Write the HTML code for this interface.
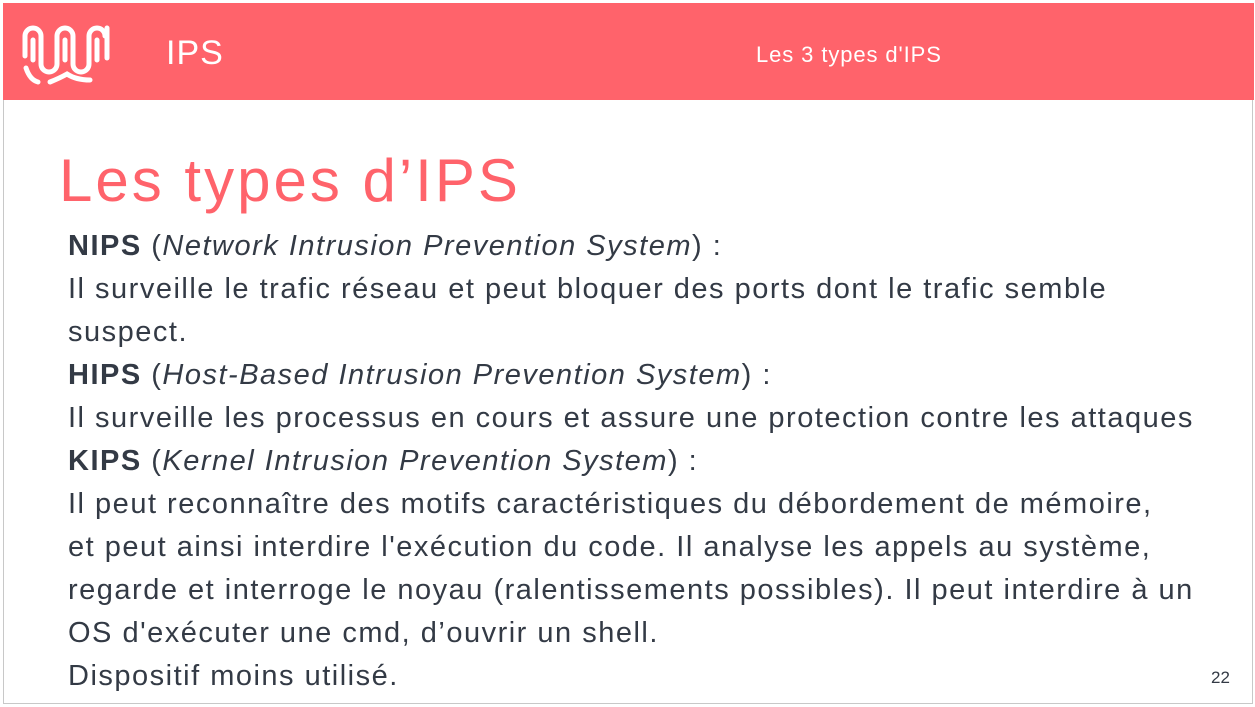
<!DOCTYPE html>
<html><head><meta charset="utf-8"><style>
body{margin:0;width:1255px;height:707px;background:#fff;position:relative;overflow:hidden;font-family:"Liberation Sans",sans-serif}
.frame{position:absolute;left:3px;top:3px;width:1250px;height:701px;border:1px solid #c8c8c8;box-sizing:border-box}
.hdr{position:absolute;left:3px;top:3px;width:1251px;height:97px;background:#ff636b}
.ips{position:absolute;left:166px;top:34px;color:#fff;font-size:34px;letter-spacing:1px}
.sub{position:absolute;left:756px;top:42px;color:#fff;font-size:22px;letter-spacing:0.9px}
h1{position:absolute;left:59px;top:146px;margin:0;font-weight:normal;color:#ff636b;font-size:60px;letter-spacing:3px}
.body{position:absolute;left:68px;top:225px;color:#333a45;font-size:29px;line-height:43px;letter-spacing:1.5px;white-space:nowrap}
.pg{position:absolute;left:1211px;top:668px;font-size:17px;color:#333a45}
</style></head><body>
<div class="frame"></div>
<div class="hdr"></div>
<svg style="position:absolute;left:20px;top:20px" width="95" height="70" viewBox="0 0 95 70" fill="none" stroke="#fff" stroke-width="5" stroke-linecap="round">
<path d="M5 36 V16 a8 8 0 0 1 16 0 V44 a8 8 0 0 0 16 0 V16 a8 8 0 0 1 16 0 V44 a8 8 0 0 0 16 0 V16 a8 8 0 0 1 16 0"/>
<path d="M13 20 V40 M45 20 V40 M77 20 V40"/>
<path d="M6 48 Q10 60 18 62 M30 62 Q40 58 47 54 Q56 60 70 60"/>
<path d="M87 8 V38"/>
</svg>
<div class="ips">IPS</div>
<div class="sub">Les 3 types d'IPS</div>
<h1>Les types d’IPS</h1>
<div class="body">
<b>NIPS</b> (<i>Network Intrusion Prevention System</i>) :<br>
Il surveille le trafic réseau et peut bloquer des ports dont le trafic semble<br>
suspect.<br>
<b>HIPS</b> (<i>Host-Based Intrusion Prevention System</i>) :<br>
Il surveille les processus en cours et assure une protection contre les attaques<br>
<b>KIPS</b> (<i>Kernel Intrusion Prevention System</i>) :<br>
Il peut reconnaître des motifs caractéristiques du débordement de mémoire,<br>
et peut ainsi interdire l'exécution du code. Il analyse les appels au système,<br>
regarde et interroge le noyau (ralentissements possibles). Il peut interdire à un<br>
OS d'exécuter une cmd, d’ouvrir un shell.<br>
Dispositif moins utilisé.
</div>
<div class="pg">22</div>
</body></html>
